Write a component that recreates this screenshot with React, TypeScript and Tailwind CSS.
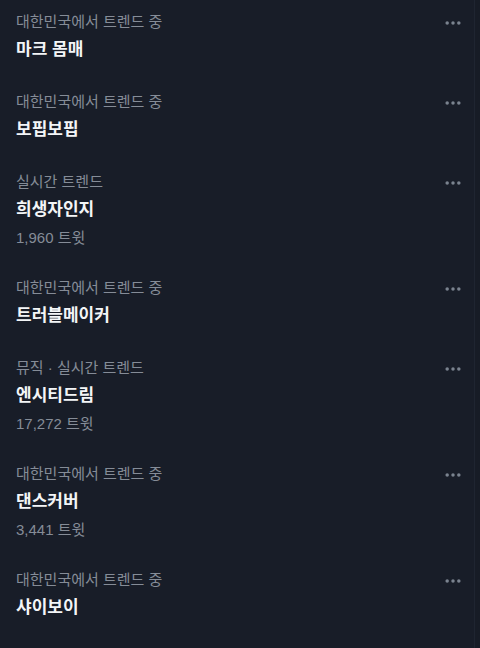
import React from 'react';

type Trend = {
    category: string;
    title: string;
    count?: string;
};

const trends: Trend[] = [
    { category: '대한민국에서 트렌드 중', title: '마크 몸매' },
    { category: '대한민국에서 트렌드 중', title: '보핍보핍' },
    { category: '실시간 트렌드', title: '희생자인지', count: '1,960 트윗' },
    { category: '대한민국에서 트렌드 중', title: '트러블메이커' },
    { category: '뮤직 · 실시간 트렌드', title: '엔시티드림', count: '17,272 트윗' },
    { category: '대한민국에서 트렌드 중', title: '댄스커버', count: '3,441 트윗' },
    { category: '대한민국에서 트렌드 중', title: '샤이보이' },
];

const MoreIcon = () => (
    <svg viewBox="0 0 24 24" className="w-5 h-5" fill="#7a838f">
        <circle cx="5" cy="12" r="2.1" />
        <circle cx="12" cy="12" r="2.1" />
        <circle cx="19" cy="12" r="2.1" />
    </svg>
);

const TrendRow = ({ trend }: { trend: Trend }) => (
    <div className="flex justify-between pl-4 pr-[11px] pt-3 pb-[18px]">
        <div className="flex flex-col">
            <span className="text-[15px] leading-5 text-[#858c97]">{trend.category}</span>
            <span className="mt-[6px] text-[17px] leading-6 font-bold text-[#f3f5f7]">{trend.title}</span>
            {trend.count && (
                <span className="mt-[6px] text-[15px] leading-5 text-[#858c97]">{trend.count}</span>
            )}
        </div>
        <div className="h-5 flex items-center pt-[1px]">
            <MoreIcon />
        </div>
    </div>
);

export default function App() {
    return (
        <div
            className="w-[480px] h-[648px] overflow-hidden bg-[#181d28] flex"
            style={{ fontFamily: '"Liberation Sans", "Noto Sans CJK KR", sans-serif' }}
        >
            <div className="flex-1 flex flex-col border-r border-[#1f2531]">
                {trends.map((t, i) => (
                    <TrendRow key={i} trend={t} />
                ))}
            </div>
            <div className="w-[5px] bg-[#171c26]" />
        </div>
    );
}
